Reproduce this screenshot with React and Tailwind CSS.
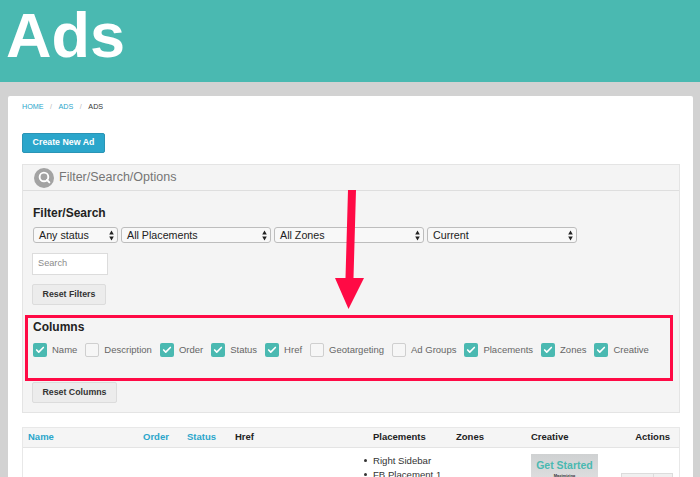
import { Check, Search } from 'lucide-react';

const columnas = [
  { nombre: 'Name', activo: true },
  { nombre: 'Description', activo: false },
  { nombre: 'Order', activo: true },
  { nombre: 'Status', activo: true },
  { nombre: 'Href', activo: true },
  { nombre: 'Geotargeting', activo: false },
  { nombre: 'Ad Groups', activo: false },
  { nombre: 'Placements', activo: true },
  { nombre: 'Zones', activo: true },
  { nombre: 'Creative', activo: true },
];

const Flechas = () => (
  <svg width="5" height="11" viewBox="0 0 5 11" className="shrink-0">
    <path d="M2.5 0.5 L4.8 4.4 H0.2 Z M2.5 10.5 L4.8 6.6 H0.2 Z" fill="#222" />
  </svg>
);

const Selector = ({ texto, ancho }) => (
  <div className={`${ancho} h-4 flex items-center justify-between pl-[5px] pr-[3px] bg-[#f8f8f8] border border-[#bdbdbd] rounded-[3px] text-[10.7px] text-[#222]`}>
    <span>{texto}</span>
    <Flechas />
  </div>
);

const Casilla = ({ nombre, activo }) => (
  <div className="flex items-center gap-[5px]">
    {activo ? (
      <div className="w-[14px] h-[14px] bg-[#4ab9b1] rounded-[2px] flex items-center justify-center">
        <Check size={10} strokeWidth={4} className="text-white" />
      </div>
    ) : (
      <div className="w-[14px] h-[14px] bg-[#f6f6f6] border border-[#cfcfcf] rounded-[2px]" />
    )}
    <span className="text-[9.5px] text-[#666]">{nombre}</span>
  </div>
);

const BotonGris = ({ texto, ancho }) => (
  <div className={`${ancho} h-[21px] -ml-px flex items-center justify-center bg-[#ececec] border border-[#dcdcdc] rounded-[2px] text-[8.8px] font-bold text-[#333]`}>
    {texto}
  </div>
);

const App = () => {
  return (
    <div className="relative h-[477px] overflow-hidden bg-[#d2d2d2] font-['Liberation_Sans',Arial,sans-serif]">
      {/* Header */}
      <header className="h-[82px] bg-[#4ab9b1] pl-[6px]">
        <h1 className="text-[63px] leading-[70px] font-bold text-white">Ads</h1>
      </header>

      <main className="mt-[14px] ml-2 mr-[7px] h-[400px] bg-white rounded-t-[2px] pl-[14px] pr-[13px] pt-2">
        {/* Migas */}
        <nav className="h-[7px] flex items-center text-[7.2px] text-[#2ba6cb]">
          <span>HOME</span>
          <span className="mx-[6.5px] text-[#bbb]">/</span>
          <span>ADS</span>
          <span className="mx-[6.5px] text-[#bbb]">/</span>
          <span className="text-[#333]">ADS</span>
        </nav>

        <div className="mt-[22px] w-[83px] h-5 flex items-center justify-center bg-[#2ba6cb] border border-[#2a94b5] rounded-[2px] text-[8.8px] font-bold text-white">
          Create New Ad
        </div>

        {/* Panel de filtros */}
        <section className="mt-[11px] h-[249px] bg-[#f4f4f4] border border-[#e4e4e4]">
          <div className="h-[26px] flex items-center gap-[5px] pl-[11px] border-b border-[#dedede]">
            <div className="w-5 h-5 rounded-full bg-[#a3a3a3] flex items-center justify-center">
              <Search size={13} strokeWidth={3.5} className="text-white" />
            </div>
            <span className="text-[12.5px] text-[#767676]">Filter/Search/Options</span>
          </div>

          <div className="pl-[10px]">
            <h2 className="mt-[15px] text-[12px] leading-[14px] font-bold text-[#222]">Filter/Search</h2>
            <div className="mt-[7px] flex gap-[3px]">
              <Selector texto="Any status" ancho="w-[85px]" />
              <Selector texto="All Placements" ancho="w-[150px]" />
              <Selector texto="All Zones" ancho="w-[150px]" />
              <Selector texto="Current" ancho="w-[150px]" />
            </div>
            <div className="mt-[10px] -ml-px w-[76px] h-[22px] flex items-center pl-[5px] bg-white border border-[#dcdcdc] text-[9.2px] text-[#8a8a8a]">
              Search
            </div>
            <div className="mt-[9px]">
              <BotonGris texto="Reset Filters" ancho="w-[74px]" />
            </div>
            <h2 className="mt-[15px] text-[12px] leading-[14px] font-bold text-[#222]">Columns</h2>
            <div className="mt-[9px] flex gap-[8px]">
              {columnas.map((c) => (
                <Casilla key={c.nombre} nombre={c.nombre} activo={c.activo} />
              ))}
            </div>
            <div className="mt-[25px]">
              <BotonGris texto="Reset Columns" ancho="w-[85px]" />
            </div>
          </div>
        </section>

        {/* Tabla */}
        <section className="mt-[14px] border border-[#e8e8e8] h-[80px]">
          <div className="h-[20px] grid grid-cols-[115px_44px_48px_138px_83px_75px_1fr] items-center pl-[5px] pr-[9px] bg-[#f5f5f5] border-b border-[#e4e4e4] text-[9.5px] font-bold text-[#222]">
            <span className="text-[#2ba6cb]">Name</span>
            <span className="text-[#2ba6cb]">Order</span>
            <span className="text-[#2ba6cb]">Status</span>
            <span>Href</span>
            <span>Placements</span>
            <span>Zones</span>
            <div className="flex justify-between">
              <span>Creative</span>
              <span>Actions</span>
            </div>
          </div>
          <div className="grid grid-cols-[345px_83px_75px_1fr] pl-[5px] pr-[6px] text-[9.6px] text-[#333]">
            <div />
            <ul className="pt-[6px] leading-[14px]">
              <li className="relative">
                <span className="absolute left-[-9px] top-[5px] w-[3px] h-[3px] rounded-full bg-[#333]" />
                Right Sidebar
              </li>
              <li className="relative">
                <span className="absolute left-[-9px] top-[5px] w-[3px] h-[3px] rounded-full bg-[#333]" />
                FB Placement 1
              </li>
            </ul>
            <div />
            <div className="flex justify-between">
              <div className="mt-[6px] w-[67px] h-[40px] bg-gradient-to-b from-[#cfd1d2] to-[#e6e6e6] flex flex-col items-center pt-[3px]">
                <span className="text-[10.5px] leading-[16px] font-bold text-[#4ab9b1]">Get Started</span>
                <span className="text-[4px] font-bold text-[#333]">Maximizing</span>
              </div>
              <div className="mt-[25px] flex w-[52px] h-[20px] border border-[#dcdcdc] bg-[#f0f0f0]">
                <div className="w-8 border-r border-[#dcdcdc]" />
              </div>
            </div>
          </div>
        </section>
      </main>

      {/* Anotacion */}
      <div className="absolute left-[25px] top-[315px] w-[648px] h-[66px] border-[3px] border-[#ff0a45]" />
      <svg className="absolute left-[334px] top-[189px]" width="32" height="122" viewBox="0 0 32 122">
        <path d="M14 1 H22 L19.5 89 H30 L14.5 120 L1 89 H11.5 Z" fill="#ff0a45" />
      </svg>
    </div>
  );
};

export default App;
